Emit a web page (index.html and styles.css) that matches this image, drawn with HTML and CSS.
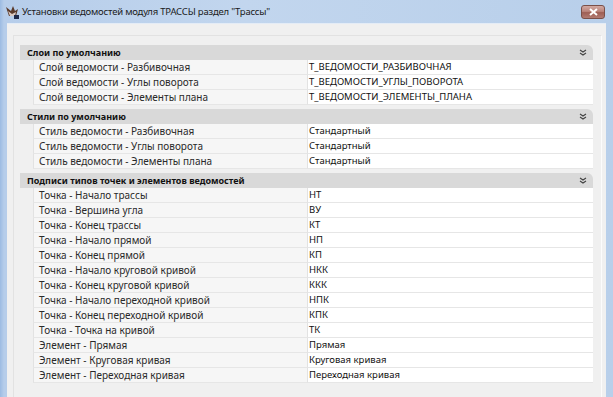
FILE: index.html
```html
<!DOCTYPE html>
<html lang="ru">

<head>
    <meta charset="UTF-8">
    <title>Установки ведомостей модуля ТРАССЫ раздел "Трассы"</title>
    <link rel="stylesheet" href="styles.css">
</head>

<body>
    <div class="window">
        <!-- Title bar -->
        <div class="titlebar">
            <svg class="app-icon" width="14" height="14" viewBox="0 0 14 14">
                <path d="M1 2 L6 6 L8 1 L10 6 L13 4 L11 11 L4 11 Z" fill="#5a3a2a"/>
                <path d="M3 6 L7 9 L11 7 L10 11 L5 11 Z" fill="#d8c8c0"/>
                <rect x="9" y="10" width="5" height="4" fill="#1e2a4a"/>
            </svg>
            <span class="title">Установки ведомостей модуля ТРАССЫ раздел "Трассы"</span>
            <button class="close-btn">
                <svg width="9" height="8" viewBox="0 0 9 8">
                    <path d="M1 1 L8 7 M8 1 L1 7" stroke="#fff" stroke-width="2"/>
                </svg>
            </button>
        </div>

        <div class="client">
            <div class="panel">
                <div class="grid">

                    <!-- Layers -->
                    <div class="category">
                        <div class="cat-header">
                            <span>Слои по умолчанию</span>
                            <svg class="chevron" width="8" height="7" viewBox="0 0 8 7"><path d="M1 1 L4 3 L7 1 M1 4 L4 6 L7 4" fill="none" stroke="#444" stroke-width="1.2"/></svg>
                        </div>
                        <div class="prop-row"><span></span><div class="prop-name">Слой ведомости - Разбивочная</div><div class="prop-value">Т_ВЕДОМОСТИ_РАЗБИВОЧНАЯ</div></div>
                        <div class="prop-row"><span></span><div class="prop-name">Слой ведомости - Углы поворота</div><div class="prop-value">Т_ВЕДОМОСТИ_УГЛЫ_ПОВОРОТА</div></div>
                        <div class="prop-row"><span></span><div class="prop-name">Слой ведомости - Элементы плана</div><div class="prop-value">Т_ВЕДОМОСТИ_ЭЛЕМЕНТЫ_ПЛАНА</div></div>
                    </div>

                    <!-- Styles -->
                    <div class="category">
                        <div class="cat-header">
                            <span>Стили по умолчанию</span>
                            <svg class="chevron" width="8" height="7" viewBox="0 0 8 7"><path d="M1 1 L4 3 L7 1 M1 4 L4 6 L7 4" fill="none" stroke="#444" stroke-width="1.2"/></svg>
                        </div>
                        <div class="prop-row"><span></span><div class="prop-name">Стиль ведомости - Разбивочная</div><div class="prop-value">Стандартный</div></div>
                        <div class="prop-row"><span></span><div class="prop-name">Стиль ведомости - Углы поворота</div><div class="prop-value">Стандартный</div></div>
                        <div class="prop-row"><span></span><div class="prop-name">Стиль ведомости - Элементы плана</div><div class="prop-value">Стандартный</div></div>
                    </div>

                    <!-- Labels -->
                    <div class="category">
                        <div class="cat-header">
                            <span>Подписи типов точек и элементов ведомостей</span>
                            <svg class="chevron" width="8" height="7" viewBox="0 0 8 7"><path d="M1 1 L4 3 L7 1 M1 4 L4 6 L7 4" fill="none" stroke="#444" stroke-width="1.2"/></svg>
                        </div>
                        <div class="prop-row"><span></span><div class="prop-name">Точка - Начало трассы</div><div class="prop-value">НТ</div></div>
                        <div class="prop-row"><span></span><div class="prop-name">Точка - Вершина угла</div><div class="prop-value">ВУ</div></div>
                        <div class="prop-row"><span></span><div class="prop-name">Точка - Конец трассы</div><div class="prop-value">КТ</div></div>
                        <div class="prop-row"><span></span><div class="prop-name">Точка - Начало прямой</div><div class="prop-value">НП</div></div>
                        <div class="prop-row"><span></span><div class="prop-name">Точка - Конец прямой</div><div class="prop-value">КП</div></div>
                        <div class="prop-row"><span></span><div class="prop-name">Точка - Начало круговой кривой</div><div class="prop-value">НКК</div></div>
                        <div class="prop-row"><span></span><div class="prop-name">Точка - Конец круговой кривой</div><div class="prop-value">ККК</div></div>
                        <div class="prop-row"><span></span><div class="prop-name">Точка - Начало переходной кривой</div><div class="prop-value">НПК</div></div>
                        <div class="prop-row"><span></span><div class="prop-name">Точка - Конец переходной кривой</div><div class="prop-value">КПК</div></div>
                        <div class="prop-row"><span></span><div class="prop-name">Точка - Точка на кривой</div><div class="prop-value">ТК</div></div>
                        <div class="prop-row"><span></span><div class="prop-name">Элемент - Прямая</div><div class="prop-value">Прямая</div></div>
                        <div class="prop-row"><span></span><div class="prop-name">Элемент - Круговая кривая</div><div class="prop-value">Круговая кривая</div></div>
                        <div class="prop-row"><span></span><div class="prop-name">Элемент - Переходная кривая</div><div class="prop-value">Переходная кривая</div></div>
                    </div>

                </div>
            </div>
        </div>
    </div>
</body>

</html>
```

FILE: styles.css
```css
html,
body {
    margin: 0;
    height: 100%;
    overflow: hidden;
}

body {
    background-color: #b9d0ea;
    font-family: "Noto Sans", "Open Sans", sans-serif;
    font-size: 10px;
    color: #1a1a1a;
}

.window {
    display: flex;
    flex-direction: column;
    height: 100%;
    padding: 0 7px 0 7px;
    background: linear-gradient(90deg, #9cbbe2 0, #b6cdea 4px, #c2d6ee 40%, #b8cfea 100%);
}

/* Title bar */
.titlebar {
    display: flex;
    align-items: center;
    height: 23px;
    flex-shrink: 0;
    margin-left: -2px;
}

.app-icon {
    margin-right: 3px;
}

.title {
    font-size: 9.5px;
    letter-spacing: -0.2px;
    color: #1b1b1b;
    flex: 1;
}

.close-btn {
    width: 24px;
    height: 14px;
    margin-right: 1px;
    margin-top: 1px;
    padding: 0;
    border: 1px solid #7a5049;
    border-radius: 3px;
    background: linear-gradient(#d2aaa3 0, #bb847b 45%, #9e5f55 55%, #b27b72 100%);
    display: flex;
    align-items: center;
    justify-content: center;
}

/* Client area */
.client {
    flex: 1;
    background-color: #f0f0f0;
    border-top: 1px solid #e4ecf6;
    padding: 11px 4px 0 6px;
}

.panel {
    height: 100%;
    border-top: 1px solid #e2e2e2;
    border-left: 1px solid #e2e2e2;
    border-right: 1px solid #fcfcfc;
    padding: 9px 8px 0 6px;
}

/* Property grid */
.category {
    margin-bottom: 4px;
}

.cat-header {
    display: flex;
    align-items: center;
    justify-content: space-between;
    height: 15px;
    padding: 0 6px 0 7px;
    background-color: #d9d9d9;
    border-radius: 0 6px 0 0;
    font-size: 9px;
    font-weight: bold;
    color: #111;
}

.chevron {
    display: block;
}

.prop-row {
    display: grid;
    grid-template-columns: 13px 275px 1fr;
    height: 15px;
}

.prop-name,
.prop-value {
    line-height: 14px;
    border-bottom: 1px solid #e6e6e6;
    white-space: nowrap;
    overflow: hidden;
}

.prop-name {
    padding-left: 5px;
    background-color: #f6f6f6;
    border-left: 1px solid #e2e2e2;
    border-right: 1px solid #e2e2e2;
    color: #2a2a2a;
}

.prop-value {
    padding-left: 1px;
    font-size: 9.5px;
    background-color: #ffffff;
    color: #111;
}
```
